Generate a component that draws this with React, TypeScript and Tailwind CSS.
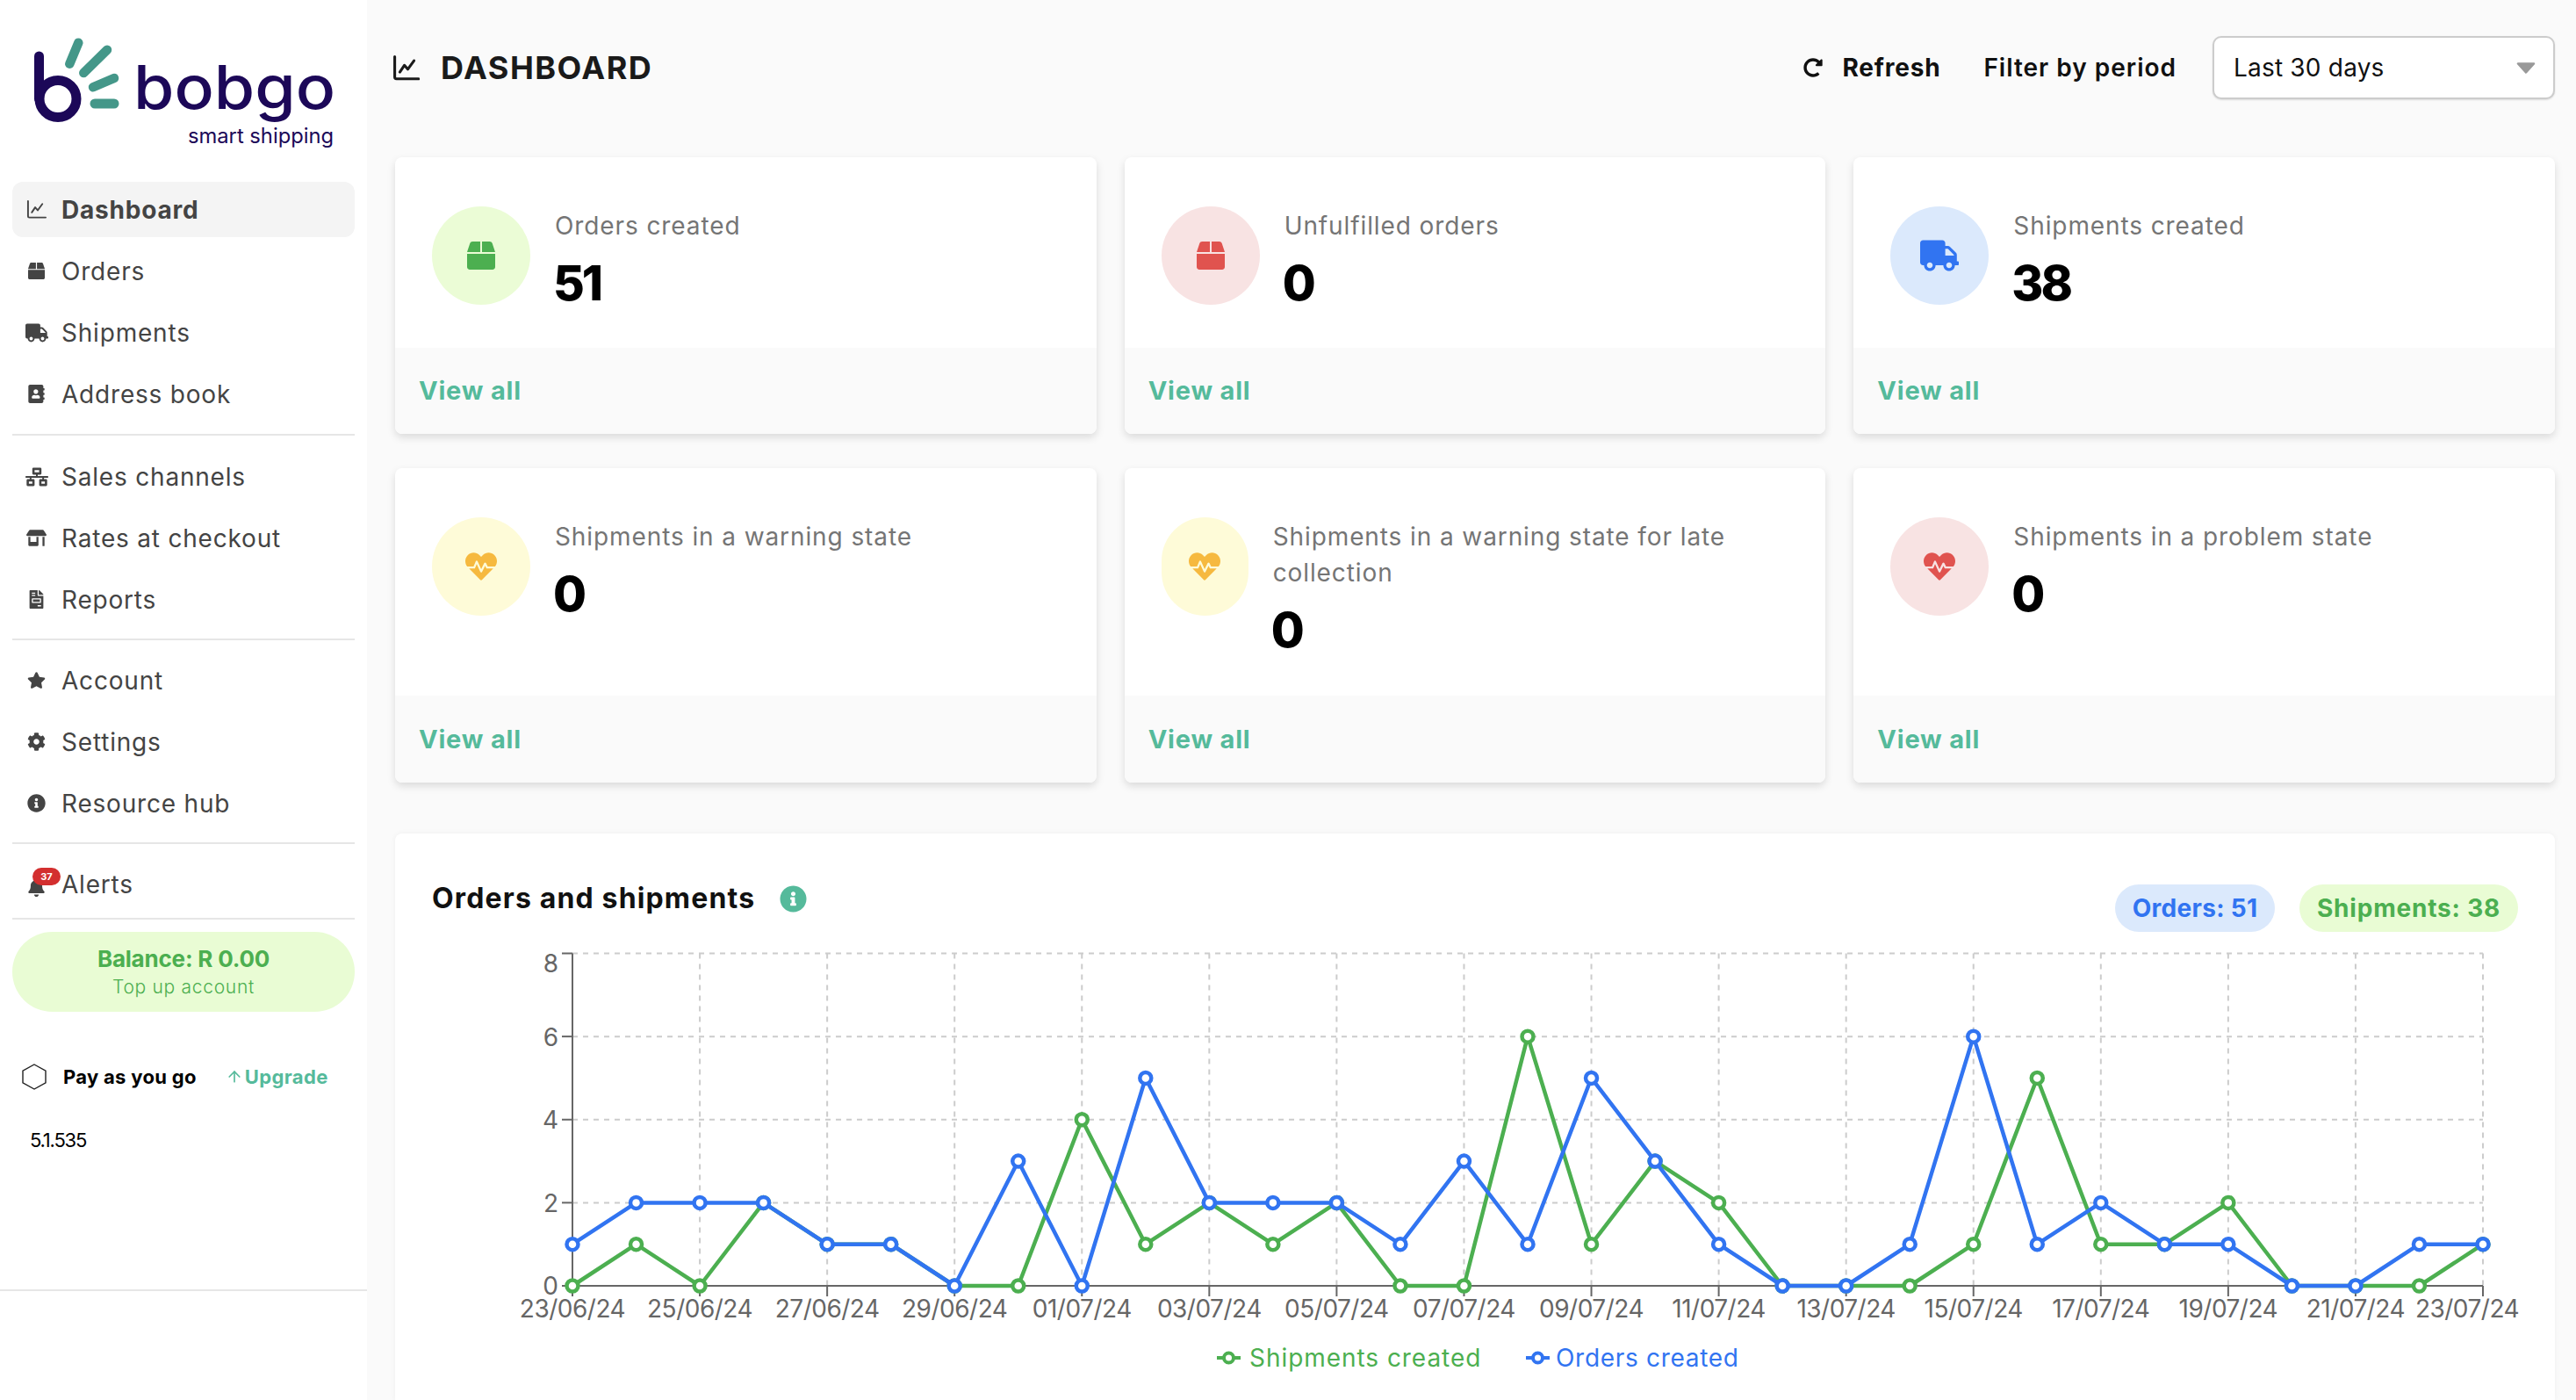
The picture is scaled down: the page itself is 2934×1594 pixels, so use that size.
import React from 'react';
import { FaBox, FaTruck, FaAddressBook, FaNetworkWired, FaStoreAlt, FaFileInvoice, FaStar, FaCog, FaInfoCircle, FaBell, FaRedoAlt, FaHeartbeat } from 'react-icons/fa';
import { ArrowUp } from 'lucide-react';

const ChartIcon = ({ className, sw = 2 }: { className?: string; sw?: number }) => (
  <svg viewBox="0 0 24 24" fill="none" stroke="currentColor" strokeWidth={sw} strokeLinecap="round" strokeLinejoin="round" className={className}>
    <path d="M2 2v18a1.5 1.5 0 0 0 1.5 1.5H23" />
    <path d="M6.5 15.5l4-6 3 3.5 5.5-7.5" />
  </svg>
);

const Logo = () => (
  <svg viewBox="0 0 418 207" className="w-[418px] h-[207px] block">
    <g fill="none" strokeLinecap="round">
      <path d="M44.5 64V112.5" stroke="#1c0858" strokeWidth="11" />
      <circle cx="66" cy="112.5" r="21" stroke="#1c0858" strokeWidth="11" />
      <g stroke="#449789">
        <path d="M79.3 72.7L89.3 48.7" strokeWidth="10.5" />
        <path d="M95.3 83L122 56.7" strokeWidth="10.5" />
        <path d="M106 99.3L130 89" strokeWidth="10.5" />
        <path d="M108 118H130" strokeWidth="11" />
      </g>
    </g>
    <text x="152" y="124" fontSize="69" fontWeight="500" fill="#1c0858" textLength="230" lengthAdjust="spacingAndGlyphs">bobgo</text>
    <text x="214" y="163" fontSize="24" fontWeight="400" fill="#1c0858" textLength="166" lengthAdjust="spacingAndGlyphs">smart shipping</text>
  </svg>
);

type NavProps = { icon: React.ReactNode; label: string; active?: boolean };
const NavRow = ({ icon, label, active }: NavProps) => (
  <div className={`h-[63px] rounded-[12px] flex items-center text-[28px] tracking-[0.8px] text-[#444] ${active ? 'bg-[#f4f4f4] font-bold' : ''}`}>
    <div className="w-[57px] flex justify-center shrink-0 -ml-px">{icon}</div>
    <span>{label}</span>
  </div>
);

const Sidebar = () => (
  <aside className="w-[418px] shrink-0 bg-white flex flex-col">
    <Logo />
    <div className="px-[14px]">
      <div className="flex flex-col gap-[7px]">
        <NavRow active label="Dashboard" icon={<ChartIcon className="w-[23px] h-[23px]" />} />
        <NavRow label="Orders" icon={<FaBox className="text-[19px]" />} />
        <NavRow label="Shipments" icon={<FaTruck className="text-[26px]" />} />
        <NavRow label="Address book" icon={<FaAddressBook className="text-[21px]" />} />
      </div>
      <div className="h-[2px] bg-[#e6e6e6] mt-[14px] mb-[15px]" />
      <div className="flex flex-col gap-[7px]">
        <NavRow label="Sales channels" icon={<FaNetworkWired className="text-[26px]" />} />
        <NavRow label="Rates at checkout" icon={<FaStoreAlt className="text-[23px]" />} />
        <NavRow label="Reports" icon={<FaFileInvoice className="text-[21px]" />} />
      </div>
      <div className="h-[2px] bg-[#e6e6e6] mt-[13px] mb-[14px]" />
      <div className="flex flex-col gap-[7px]">
        <NavRow label="Account" icon={<FaStar className="text-[21px]" />} />
        <NavRow label="Settings" icon={<FaCog className="text-[21px]" />} />
        <NavRow label="Resource hub" icon={<FaInfoCircle className="text-[21px]" />} />
      </div>
      <div className="h-[2px] bg-[#e6e6e6] mt-[13px] mb-[14px]" />
      <div className="relative">
        <NavRow label="Alerts" icon={<FaBell className="text-[21px] mt-[8px]" />} />
        <div className="absolute left-[23px] top-[13px] w-[32px] h-[20px] rounded-full bg-[#d32f2f] text-white text-[11px] font-bold flex items-center justify-center">37</div>
      </div>
      <div className="h-[2px] bg-[#e6e6e6] mt-[7px] mb-[14px]" />
      <div className="h-[91px] rounded-[46px] bg-[#e9fcd4] flex flex-col items-center justify-center text-[#4caf50]">
        <div className="text-[26px] leading-[34px] font-bold tracking-[-0.2px]">Balance: R 0.00</div>
        <div className="text-[21px] leading-[30px] font-light tracking-[0.7px]">Top up account</div>
      </div>
      <div className="mt-[59px] h-[30px] flex items-center">
        <svg viewBox="0 0 28 30" className="w-[28px] h-[30px] ml-[11px] shrink-0" fill="none" stroke="#222" strokeWidth="1.4">
          <path d="M14 1L27 8.2V21.8L14 29L1 21.8V8.2Z" />
        </svg>
        <span className="ml-[19px] text-[22px] font-bold text-black whitespace-nowrap tracking-[0.3px]">Pay as you go</span>
        <span className="ml-[33px] flex items-center text-[22px] font-bold text-[#55ba9b] whitespace-nowrap tracking-[0.4px]">
          <ArrowUp className="w-[20px] h-[20px] mr-[2px]" strokeWidth={2} />Upgrade
        </span>
      </div>
      <div className="mt-[42px] ml-[20px] text-[22px] leading-[30px] text-black font-normal tracking-[-1.2px]">5.1.535</div>
    </div>
    <div className="flex-1" />
    <div className="h-[2px] bg-[#e6e6e6]" />
    <div className="h-[124px]" />
  </aside>
);

type CardProps = { label: string; value: string; icon: React.ReactNode; bg: string; narrow?: boolean; footer: string };
const StatCard = ({ label, value, icon, bg, narrow, footer }: CardProps) => (
  <div className="bg-white rounded-[8px] overflow-hidden flex flex-col shadow-[0_4px_10px_rgba(0,0,0,0.13)]">
    <div className="flex-1 pt-[56px] pl-[42px] pr-[42px] flex">
      <div className={`${bg} ${narrow ? 'w-[99px]' : 'w-[112px]'} h-[112px] rounded-full shrink-0 flex items-center justify-center`}>{icon}</div>
      <div className="ml-[28px]">
        <div className="pt-[2px] text-[28px] leading-[41px] text-[#757575] tracking-[0.9px]">{label}</div>
        <div className="mt-[11px] -ml-[2px] text-[55px] leading-[66px] font-extrabold text-black tracking-[-3px]">{value}</div>
      </div>
    </div>
    <div className={`${footer} bg-[#fafafa] pl-[27px] flex items-center text-[29px] font-bold text-[#55ba9b] tracking-[0.8px]`}>View all</div>
  </div>
);

const orders = [1,2,2,2,1,1,0,3,0,5,2,2,2,1,3,1,5,3,1,0,0,1,6,1,2,1,1,0,0,1,1];
const shipments = [0,1,0,2,1,1,0,0,4,1,2,1,2,0,0,6,1,3,2,0,0,0,1,5,1,1,2,0,0,0,1];
const X0 = 202, X1 = 2378, Y0 = 403, YT = 24.5;
const xAt = (i: number) => X0 + ((X1 - X0) * i) / 30;
const yAt = (v: number) => Y0 - ((Y0 - YT) * v) / 8;
const dateLabel = (i: number) => {
  const d = new Date(2024, 5, 23 + i);
  return `${String(d.getDate()).padStart(2, '0')}/${String(d.getMonth() + 1).padStart(2, '0')}/24`;
};
const BLUE = '#3174f1';
const GREEN = '#4caf50';

const Series = ({ data, color }: { data: number[]; color: string }) => (
  <g>
    <polyline points={data.map((v, i) => `${xAt(i)},${yAt(v)}`).join(' ')} fill="none" stroke={color} strokeWidth="4.5" strokeLinejoin="round" />
    {data.map((v, i) => (
      <circle key={i} cx={xAt(i)} cy={yAt(v)} r="6.5" fill="#fff" stroke={color} strokeWidth="4.5" />
    ))}
  </g>
);

const Chart = () => {
  const ticks = Array.from({ length: 15 }, (_, k) => k * 2);
  return (
    <svg viewBox="0 0 2460 533" className="w-[2460px] h-[533px] block">
      <g stroke="#ccc" strokeWidth="2" strokeDasharray="6 6" fill="none">
        {[2, 4, 6, 8].map((v) => <line key={v} x1={X0} x2={X1} y1={yAt(v)} y2={yAt(v)} />)}
        {[...ticks.filter((t) => t > 0), 30].map((t) => <line key={t} x1={xAt(t)} x2={xAt(t)} y1={YT} y2={Y0} />)}
      </g>
      <g stroke="#666" strokeWidth="2" fill="none">
        <line x1={X0} x2={X0} y1={YT} y2={Y0} />
        <line x1={X0} x2={X1} y1={Y0} y2={Y0} />
        {[0, 2, 4, 6, 8].map((v) => <line key={v} x1={X0 - 12} x2={X0} y1={yAt(v)} y2={yAt(v)} />)}
        {[...ticks, 30].map((t) => <line key={t} x1={xAt(t)} x2={xAt(t)} y1={Y0} y2={Y0 + 12} />)}
      </g>
      <g fill="#666" fontSize="28">
        <text x="186" y="413" textAnchor="end">0</text>
        <text x="186" y="319" textAnchor="end">2</text>
        <text x="186" y="224" textAnchor="end">4</text>
        <text x="186" y="130" textAnchor="end">6</text>
        <text x="186" y="46" textAnchor="end">8</text>
        {[...ticks, 30].map((t) => (
          <text key={t} x={t === 30 ? 2360 : xAt(t)} y="439" textAnchor="middle" letterSpacing="-0.5">{dateLabel(t)}</text>
        ))}
      </g>
      <Series data={shipments} color={GREEN} />
      <Series data={orders} color={BLUE} />
      <g>
        <line x1="936" x2="963" y1="485" y2="485" stroke={GREEN} strokeWidth="4" />
        <circle cx="949.5" cy="485" r="5.5" fill="#fff" stroke={GREEN} strokeWidth="4" />
        <text x="973" y="495" fontSize="28" fill={GREEN} letterSpacing="0.95">Shipments created</text>
        <line x1="1288" x2="1315" y1="485" y2="485" stroke={BLUE} strokeWidth="4" />
        <circle cx="1301.5" cy="485" r="5.5" fill="#fff" stroke={BLUE} strokeWidth="4" />
        <text x="1322" y="495" fontSize="28" fill={BLUE} letterSpacing="0.7">Orders created</text>
      </g>
    </svg>
  );
};

export default function App() {
  return (
    <div className="w-[2934px] h-[1594px] overflow-hidden flex bg-[#fafafa] font-['Inter',sans-serif]">
      <Sidebar />
      <main className="flex-1 min-w-0 pl-[32px] pr-[24px] flex flex-col">
        <header className="mt-[41px] h-[72px] flex items-center shrink-0">
          <ChartIcon sw={2.4} className="w-[31px] h-[31px] text-[#1a1a1a] -ml-[3px]" />
          <h1 className="ml-[24px] text-[36px] font-bold text-[#1a1a1a] tracking-[1.5px]">DASHBOARD</h1>
          <div className="flex-1" />
          <FaRedoAlt className="text-[22px] text-[#111]" />
          <span className="ml-[22px] text-[28px] font-bold text-[#111] tracking-[0.8px]">Refresh</span>
          <span className="ml-[49px] text-[28px] font-semibold text-[#111] tracking-[1px]">Filter by period</span>
          <div className="ml-[41px] w-[390px] h-[72px] bg-white rounded-[10px] border-2 border-[#ccc] shadow-[0_1px_2px_rgba(0,0,0,0.12)] flex items-center pl-[22px] pr-[20px] text-[28px] text-[#111] tracking-[0.2px]">
            <span className="flex-1">Last 30 days</span>
            <svg viewBox="0 0 22 13" className="w-[22px] h-[13px]"><path d="M2 1.5H20L11 11.5Z" fill="#999" stroke="#999" strokeWidth="2.5" strokeLinejoin="round" /></svg>
          </div>
        </header>

        <section className="mt-[66px] grid grid-cols-3 gap-x-[32px] gap-y-[39px] grid-rows-[315px_358px] shrink-0">
          <StatCard footer="h-[98px]" label="Orders created" value="51" bg="bg-[#ebfcd6]" icon={<FaBox className="text-[32px] text-[#4caf50]" />} />
          <StatCard footer="h-[98px]" label="Unfulfilled orders" value="0" bg="bg-[#f8e3e3]" icon={<FaBox className="text-[32px] text-[#e0534f]" />} />
          <StatCard footer="h-[98px]" label="Shipments created" value="38" bg="bg-[#dbe9fc]" icon={<FaTruck className="text-[44px] text-[#3174f1]" />} />
          <StatCard footer="h-[99px]" label="Shipments in a warning state" value="0" bg="bg-[#fefbd8]" icon={<FaHeartbeat className="text-[36px] text-[#f6b93f]" />} />
          <StatCard footer="h-[99px]" narrow label="Shipments in a warning state for late collection" value="0" bg="bg-[#fefbd8]" icon={<FaHeartbeat className="text-[36px] text-[#f6b93f]" />} />
          <StatCard footer="h-[99px]" label="Shipments in a problem state" value="0" bg="bg-[#f8e3e3]" icon={<FaHeartbeat className="text-[36px] text-[#e0534f]" />} />
        </section>

        <section className="mt-[58px] flex-1 bg-white rounded-t-[8px] shadow-[0_0_6px_rgba(0,0,0,0.05)]">
          <div className="pt-[58px] px-[42px] h-[112px] flex items-start">
            <h2 className="text-[32px] leading-[32px] font-bold text-[#111] tracking-[1.15px]">Orders and shipments</h2>
            <FaInfoCircle className="ml-[28px] mt-[1px] text-[31px] text-[#55ba9b]" />
            <div className="flex-1" />
            <div className="w-[182px] h-[54px] rounded-[27px] bg-[#dbe9fc] text-[#3174f1] text-[28px] font-bold tracking-[0.3px] flex items-center justify-center">Orders: 51</div>
            <div className="ml-[28px] w-[249px] h-[54px] rounded-[27px] bg-[#e9fcd4] text-[#4caf50] text-[28px] font-bold tracking-[0.8px] flex items-center justify-center">Shipments: 38</div>
          </div>
          <Chart />
        </section>
      </main>
    </div>
  );
}
